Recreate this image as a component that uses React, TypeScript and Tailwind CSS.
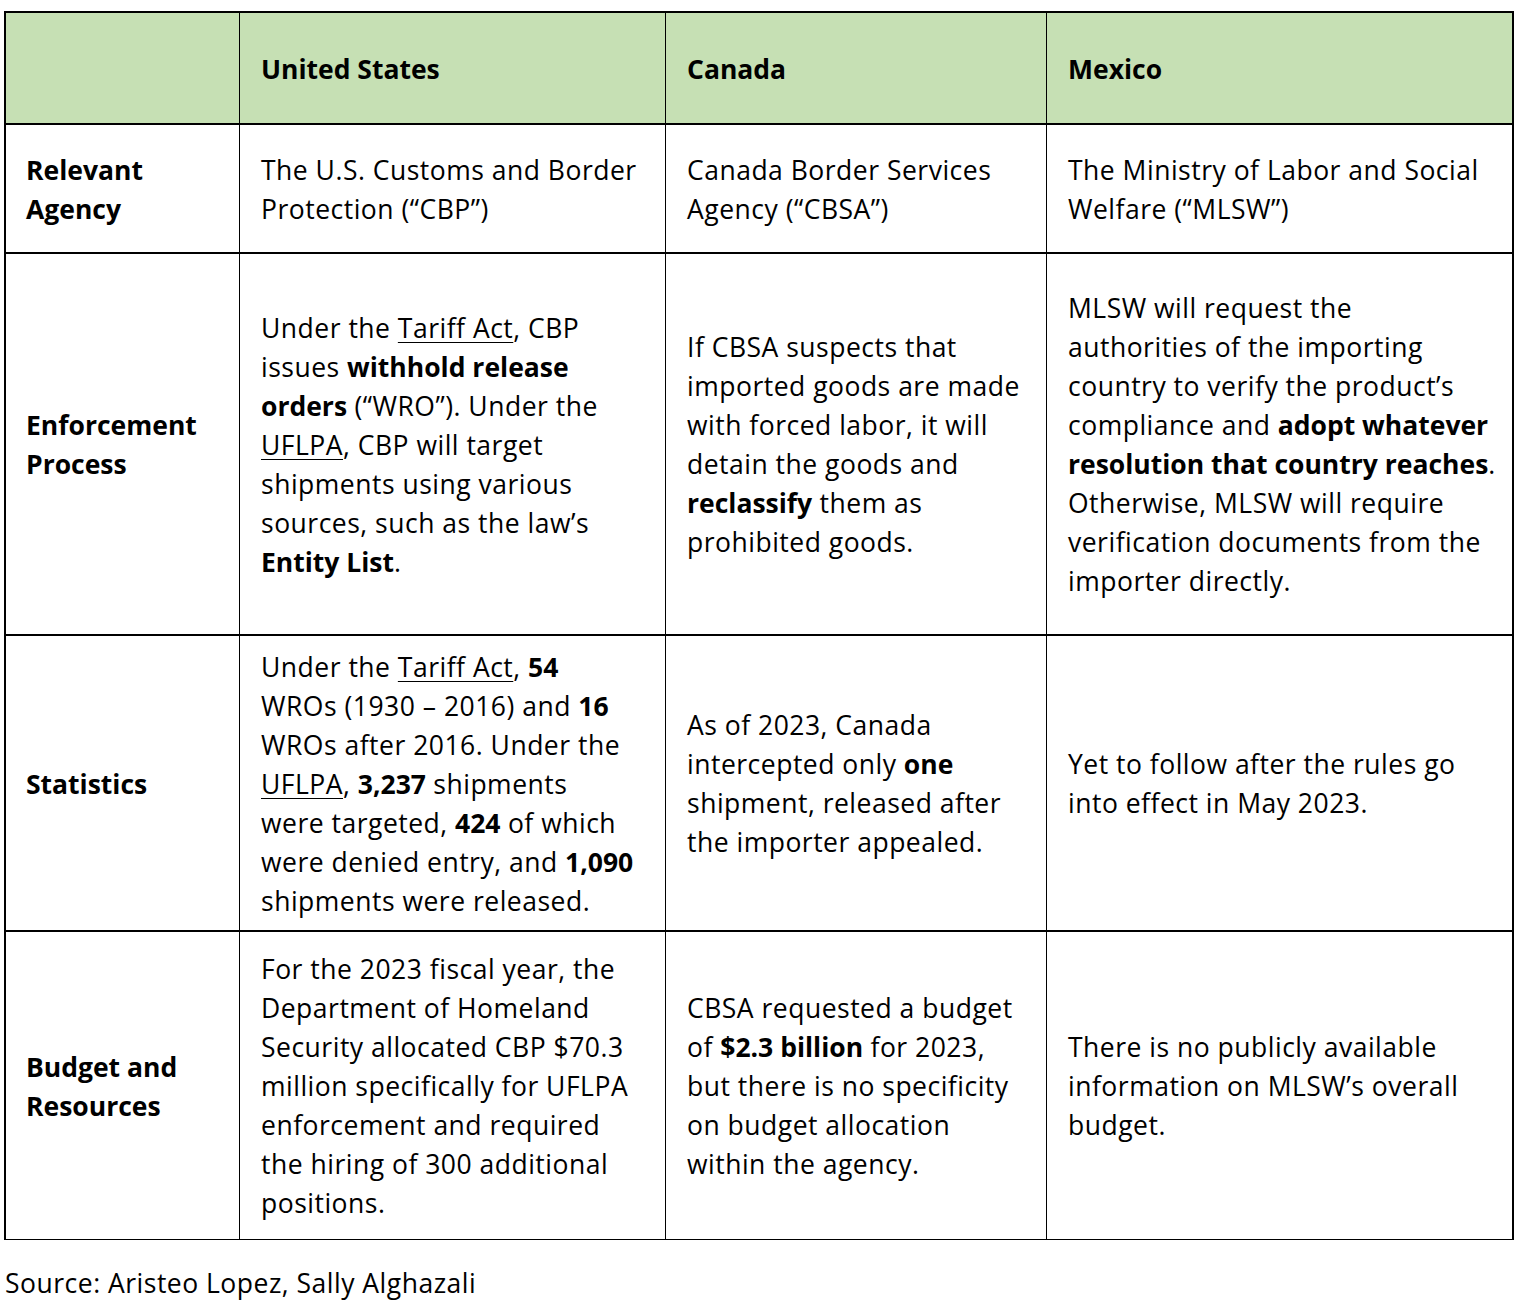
import React from "react";

const B = ({ children }: { children: React.ReactNode }) => (
  <span className="font-bold tracking-[0px]">{children}</span>
);
const U = ({ children }: { children: React.ReactNode }) => (
  <span className="underline decoration-1 underline-offset-[4px]">{children}</span>
);

type Lines = React.ReactNode[];

function Cell({ lines, first, bold }: { lines: Lines; first?: boolean; bold?: boolean }) {
  return (
    <div
      className={
        "flex flex-col justify-center pt-[2px] " +
        (first ? "pl-[20px]" : "border-l border-black pl-[21px]") +
        (bold ? " font-bold tracking-[0px]" : "")
      }
    >
      {lines.map((l, i) => (
        <div key={i} className="whitespace-nowrap">
          {l}
        </div>
      ))}
    </div>
  );
}

function Row({ h, cells, header, last }: { h: string; cells: Lines[]; header?: boolean; last?: boolean }) {
  return (
    <div
      className={
        "grid grid-cols-[233px_426px_381px_466px] " +
        h +
        (header ? " bg-[#c6e0b4]" : "") +
        (last ? " border-b border-black" : " border-b-2 border-black")
      }
    >
      {cells.map((c, i) => (
        <Cell key={i} lines={c} first={i === 0} bold={header || i === 0} />
      ))}
    </div>
  );
}

export default function App() {
  return (
    <div
      className="bg-white w-[1533px] min-h-[1314px] pt-[11px] pl-[4px] text-black text-[26.5px] leading-[39px] tracking-[0.5px]"
      style={{ fontFamily: "'Open Sans', 'Noto Sans', sans-serif" }}
    >
      <div className="w-[1510px] border-t-2 border-l-2 border-r-2 border-black">
        <Row
          header
          h="h-[112px]"
          cells={[[""], ["United States"], ["Canada"], ["Mexico"]]}
        />
        <Row
          h="h-[129px]"
          cells={[
            ["Relevant", "Agency"],
            ["The U.S. Customs and Border", "Protection (“CBP”)"],
            ["Canada Border Services", "Agency (“CBSA”)"],
            ["The Ministry of Labor and Social", "Welfare (“MLSW”)"],
          ]}
        />
        <Row
          h="h-[382px]"
          cells={[
            ["Enforcement", "Process"],
            [
              <>Under the <U>Tariff Act</U>, CBP</>,
              <>issues <B>withhold release</B></>,
              <><B>orders</B> (“WRO”). Under the</>,
              <><U>UFLPA</U>, CBP will target</>,
              "shipments using various",
              "sources, such as the law’s",
              <><B>Entity List</B>.</>,
            ],
            [
              "If CBSA suspects that",
              "imported goods are made",
              "with forced labor, it will",
              "detain the goods and",
              <><B>reclassify</B> them as</>,
              "prohibited goods.",
            ],
            [
              "MLSW will request the",
              "authorities of the importing",
              "country to verify the product’s",
              <>compliance and <B>adopt whatever</B></>,
              <><B>resolution that country reaches</B>.</>,
              "Otherwise, MLSW will require",
              "verification documents from the",
              "importer directly.",
            ],
          ]}
        />
        <Row
          h="h-[296px]"
          cells={[
            ["Statistics"],
            [
              <>Under the <U>Tariff Act</U>, <B>54</B></>,
              <>WROs (1930 – 2016) and <B>16</B></>,
              "WROs after 2016. Under the",
              <><U>UFLPA</U>, <B>3,237</B> shipments</>,
              <>were targeted, <B>424</B> of which</>,
              <>were denied entry, and <B>1,090</B></>,
              "shipments were released.",
            ],
            [
              "As of 2023, Canada",
              <>intercepted only <B>one</B></>,
              "shipment, released after",
              "the importer appealed.",
            ],
            ["Yet to follow after the rules go", "into effect in May 2023."],
          ]}
        />
        <Row
          last
          h="h-[308px]"
          cells={[
            ["Budget and", "Resources"],
            [
              "For the 2023 fiscal year, the",
              "Department of Homeland",
              "Security allocated CBP $70.3",
              "million specifically for UFLPA",
              "enforcement and required",
              "the hiring of 300 additional",
              "positions.",
            ],
            [
              "CBSA requested a budget",
              <>of <B>$2.3 billion</B> for 2023,</>,
              "but there is no specificity",
              "on budget allocation",
              "within the agency.",
            ],
            ["There is no publicly available", "information on MLSW’s overall", "budget."],
          ]}
        />
      </div>
      <div className="mt-[24px] pl-[1px]">Source: Aristeo Lopez, Sally Alghazali</div>
    </div>
  );
}
